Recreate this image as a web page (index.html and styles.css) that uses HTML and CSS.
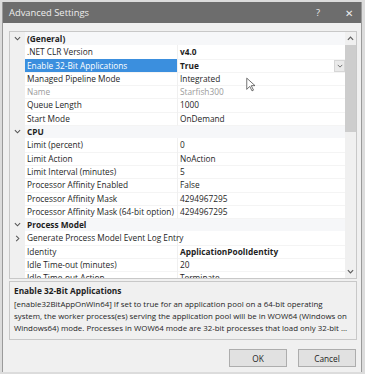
FILE: index.html
```html
<!DOCTYPE html>
<html lang="en">
<head>
  <meta charset="UTF-8">
  <title>Advanced Settings</title>
  <link rel="stylesheet" href="styles.css">
</head>
<body>
  <div class="window">
    <div class="titlebar">
      <span class="title">Advanced Settings</span>
      <span class="help">?</span>
      <span class="close">&#x2715;</span>
    </div>

    <div class="content">
      <div class="grid">
        <div class="rows">
          <div class="row cat"><span class="gutter"><svg class="chev" viewBox="0 0 8 5"><path d="M1 1l3 3 3-3"/></svg></span><span class="cat-name">(General)</span></div>
          <div class="row"><span class="gutter"></span><span class="name">.NET CLR Version</span><span class="value bold">v4.0</span></div>
          <div class="row selected"><span class="gutter"></span><span class="name">Enable 32-Bit Applications</span><span class="value bold">True<span class="dropdown"><svg viewBox="0 0 8 5"><path d="M1 1l3 3 3-3"/></svg></span></span></div>
          <div class="row"><span class="gutter"></span><span class="name">Managed Pipeline Mode</span><span class="value">Integrated</span></div>
          <div class="row readonly"><span class="gutter"></span><span class="name">Name</span><span class="value">Starfish300</span></div>
          <div class="row"><span class="gutter"></span><span class="name">Queue Length</span><span class="value">1000</span></div>
          <div class="row"><span class="gutter"></span><span class="name">Start Mode</span><span class="value">OnDemand</span></div>
          <div class="row cat"><span class="gutter"><svg class="chev" viewBox="0 0 8 5"><path d="M1 1l3 3 3-3"/></svg></span><span class="cat-name">CPU</span></div>
          <div class="row"><span class="gutter"></span><span class="name">Limit (percent)</span><span class="value">0</span></div>
          <div class="row"><span class="gutter"></span><span class="name">Limit Action</span><span class="value">NoAction</span></div>
          <div class="row"><span class="gutter"></span><span class="name">Limit Interval (minutes)</span><span class="value">5</span></div>
          <div class="row"><span class="gutter"></span><span class="name">Processor Affinity Enabled</span><span class="value">False</span></div>
          <div class="row"><span class="gutter"></span><span class="name">Processor Affinity Mask</span><span class="value">4294967295</span></div>
          <div class="row"><span class="gutter"></span><span class="name">Processor Affinity Mask (64-bit option)</span><span class="value">4294967295</span></div>
          <div class="row cat"><span class="gutter"><svg class="chev" viewBox="0 0 8 5"><path d="M1 1l3 3 3-3"/></svg></span><span class="cat-name">Process Model</span></div>
          <div class="row"><span class="gutter"><svg class="chev right" viewBox="0 0 5 8"><path d="M1 1l3 3-3 3"/></svg></span><span class="name">Generate Process Model Event Log Entry</span><span class="value"></span></div>
          <div class="row"><span class="gutter"></span><span class="name">Identity</span><span class="value bold">ApplicationPoolIdentity</span></div>
          <div class="row"><span class="gutter"></span><span class="name">Idle Time-out (minutes)</span><span class="value">20</span></div>
          <div class="row"><span class="gutter"></span><span class="name">Idle Time-out Action</span><span class="value">Terminate</span></div>
        </div>
        <div class="scrollbar">
          <svg class="arrow" viewBox="0 0 8 5"><path d="M1 4l3-3 3 3"/></svg>
          <div class="thumb"></div>
          <div class="track"></div>
          <svg class="arrow" viewBox="0 0 8 5"><path d="M1 1l3 3 3-3"/></svg>
        </div>
      </div>

      <div class="desc">
        <div class="desc-title">Enable 32-Bit Applications</div>
        <p>[enable32BitAppOnWin64] If set to true for an application pool on a 64-bit operating system, the worker process(es) serving the application pool will be in WOW64 (Windows on Windows64) mode. Processes in WOW64 mode are 32-bit processes that load only 32-bit ...</p>
      </div>

      <div class="buttons">
        <button>OK</button>
        <button>Cancel</button>
      </div>
    </div>

    <svg class="cursor" viewBox="0 0 12 19"><path d="M1 1v15l4-4 3 6 2-1-3-6h5z"/></svg>
  </div>
</body>
</html>
```

FILE: styles.css
```css
body {
  margin: 0;
  background-color: #dcdcdc;
  font-family: "Open Sans", "Noto Sans", sans-serif;
  font-size: 8.3px;
  color: #1e1e1e;
}
.window {
  position: relative;
  margin: 2px 3px 0 2px;
  height: 370px;
  background-color: #f0f0f0;
  border-left: 1px solid #9a9a9a;
  border-right: 1px solid #9a9a9a;
}
.titlebar {
  display: flex;
  align-items: center;
  height: 21px;
  background-color: #6d6d6d;
  color: #ececec;
  padding-left: 6px;
}
.title {
  flex: 1;
  font-size: 9.4px;
}
.help {
  width: 38px;
  text-align: center;
  font-size: 9.4px;
}
.close {
  width: 24px;
  text-align: center;
  font-size: 10px;
}
.content {
  padding: 8px 4px 0 6px;
}
.grid {
  display: flex;
  height: 246px;
  background-color: #fff;
  border: 1px solid #c8c8c8;
}
.rows {
  flex: 1;
  overflow: hidden;
}
.row {
  display: grid;
  grid-template-columns: 15px 153px 1fr;
  height: 13.3px;
  line-height: 13.3px;
  white-space: nowrap;
}
.gutter {
  display: flex;
  align-items: center;
  justify-content: center;
  background-color: #f0f0f0;
}
.name {
  padding-left: 2px;
  border-right: 1px solid #f0f0f0;
  border-bottom: 1px solid #f4f4f4;
}
.value {
  position: relative;
  padding-left: 2px;
  border-bottom: 1px solid #f4f4f4;
}
.bold {
  font-weight: 700;
}
.cat {
  background-color: #f6f7f9;
}
.cat-name {
  grid-column: 2 / 4;
  padding-left: 2px;
  font-weight: 700;
}
.chev {
  width: 7px;
  height: 5px;
  fill: none;
  stroke: #555;
  stroke-width: 1.2;
}
.chev.right {
  width: 5px;
  height: 7px;
}
.selected .name {
  background-color: #3b8fde;
  color: #fff;
}
.readonly .name, .readonly .value {
  color: #9b9b9b;
}
.dropdown {
  position: absolute;
  top: 1px;
  right: 0;
  width: 11px;
  height: 12px;
  display: flex;
  align-items: center;
  justify-content: center;
  background-color: #eaeaea;
  border: 1px solid #d6d6d6;
  box-sizing: border-box;
}
.dropdown svg {
  width: 6px;
  height: 4px;
  fill: none;
  stroke: #666;
  stroke-width: 1.2;
}
.scrollbar {
  width: 11px;
  display: flex;
  flex-direction: column;
  align-items: center;
  background-color: #f0f0f0;
}
.arrow {
  width: 7px;
  height: 5px;
  margin: 4px 0;
  fill: none;
  stroke: #606060;
  stroke-width: 1.4;
}
.thumb {
  width: 11px;
  height: 87px;
  background-color: #cdcdcd;
}
.track {
  flex: 1;
}
.desc {
  margin-top: 2px;
  height: 52px;
  border: 1px solid #c8c8c8;
  padding: 3px 4px 2px;
  overflow: hidden;
  font-size: 7.9px;
}
.desc-title {
  font-weight: 700;
  font-size: 8.3px;
  line-height: 12px;
  margin-bottom: 1px;
}
.desc p {
  margin: 0;
  line-height: 12px;
}
.buttons {
  display: flex;
  justify-content: flex-end;
  gap: 11px;
  margin-top: 9px;
  padding-right: 1px;
}
button {
  width: 58px;
  height: 18px;
  padding: 0;
  font-family: inherit;
  font-size: 8.3px;
  color: #1e1e1e;
  background-color: #e1e1e1;
  border: 1px solid #adadad;
}
.cursor {
  position: absolute;
  left: 243px;
  top: 75px;
  width: 9px;
  height: 15px;
  fill: #fff;
  stroke: #444;
  stroke-width: 1;
}
```
